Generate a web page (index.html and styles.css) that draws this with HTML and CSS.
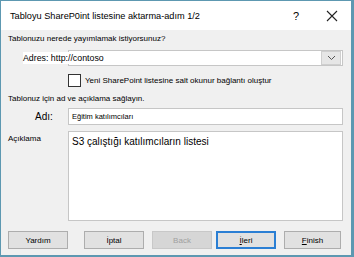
FILE: index.html
```html
<!DOCTYPE html>
<html lang="tr">
<head>
<meta charset="utf-8">
<link rel="stylesheet" href="styles.css">
</head>
<body>
<div class="dialog">
  <div class="titlebar">
    <span class="title">Tabloyu ShareP0int listesine aktarma-adım 1/2</span>
    <span class="help">?</span>
    <span class="close">
      <svg width="12" height="12" viewBox="0 0 12 12"><path d="M1 1 L11 11 M11 1 L1 11" stroke="#222" stroke-width="1.1" fill="none"/></svg>
    </span>
  </div>
  <div class="content">
    <div class="section">Tablonuzu nerede yayımlamak istiyorsunuz?</div>
    <div class="row addr-row">
      <span class="addr-label">Adres: http://contoso</span>
      <div class="combo">
        <span class="combo-btn">
          <svg width="9" height="6" viewBox="0 0 9 6"><path d="M1 1 L4.5 4.5 L8 1" stroke="#555" stroke-width="1" fill="none"/></svg>
        </span>
      </div>
    </div>
    <div class="row check-row">
      <span class="checkbox"></span>
      <span class="small">Yeni SharePoint listesine salt okunur bağlantı oluştur</span>
    </div>
    <div class="section section2">Tablonuz için ad ve açıklama sağlayın.</div>
    <div class="row name-row">
      <span class="name-label">Adı:</span>
      <div class="input"><span class="input-text">Eğitim katılımcıları</span></div>
    </div>
    <div class="row desc-row">
      <span class="small desc-label">Açıklama</span>
      <div class="textarea">S3 çalıştığı katılımcıların listesi</div>
    </div>
  </div>
  <div class="buttons">
    <span class="btn">Yardım</span>
    <span class="btn">İptal</span>
    <span class="btn disabled">Back</span>
    <span class="btn primary"><u>İ</u>leri</span>
    <span class="btn"><u>F</u>inish</span>
  </div>
</div>
</body>
</html>
```

FILE: styles.css
```css
html, body {
  margin: 0;
  padding: 0;
  background: #f0f0f0;
}
.dialog {
  width: 354px;
  height: 257px;
  box-sizing: border-box;
  border: 1px solid #5d98b1;
  border-right-width: 3px;
  border-bottom-width: 2px;
  background: #f0f0f0;
  display: flex;
  flex-direction: column;
  font-family: "Liberation Sans", Arial, sans-serif;
  color: #000;
}
.titlebar {
  height: 29px;
  background: #fff;
  display: flex;
  align-items: center;
  padding-left: 9px;
  padding-right: 13px;
  flex: none;
}
.title {
  font-family: "Liberation Sans", Arial, sans-serif;
  font-size: 9.2px;
  flex: 1;
  padding-top: 1px;
}
.help {
  font-family: "Liberation Sans", sans-serif;
  font-size: 11px;
  margin-right: 27px;
}
.close {
  display: flex;
}
.content {
  padding: 0 8px 0 7px;
  flex: 1;
  display: flex;
  flex-direction: column;
}
.section {
  font-size: 8px;
  margin-top: 3px;
  height: 12px;
  line-height: 12px;
}
.small {
  font-size: 8px;
}
.row {
  display: flex;
  align-items: center;
}
.addr-row {
  margin-top: 5px;
  height: 16px;
  position: relative;
}
.addr-label {
  position: absolute;
  left: 15px;
  top: 2px;
  background: #fff;
  font-family: "Liberation Sans", sans-serif;
  font-size: 8.8px;
  line-height: 12px;
  padding-right: 2px;
  z-index: 1;
}
.combo {
  margin-left: 60px;
  flex: 1;
  height: 16px;
  box-sizing: border-box;
  border: 1px solid #c6c6c6;
  background: #fff;
  display: flex;
  justify-content: flex-end;
  padding: 0 1px;
  align-items: center;
}
.combo-btn {
  width: 18px;
  height: 12px;
  background: #e6e6e6;
  border: 1px solid #cfcfcf;
  display: flex;
  align-items: center;
  justify-content: center;
}
.check-row {
  margin-top: 8px;
  height: 13px;
  padding-left: 60px;
  gap: 4px;
}
.checkbox {
  width: 11px;
  height: 11px;
  border: 1px solid #333;
  background: #fff;
}
.section2 {
  margin-top: 6px;
}
.name-row {
  margin-top: 3px;
  height: 17px;
}
.name-label {
  width: 60px;
  box-sizing: border-box;
  padding-left: 27px;
  font-family: "Liberation Sans", sans-serif;
  font-size: 10px;
}
.input {
  flex: 1;
  height: 17px;
  box-sizing: border-box;
  border: 1px solid #c6c6c6;
  background: #fff;
  padding-left: 3px;
  display: flex;
  align-items: center;
}
.input-text {
  font-size: 7.5px;
}
.desc-row {
  margin-top: 6px;
  align-items: flex-start;
}
.desc-label {
  width: 60px;
  padding-top: 3px;
}
.textarea {
  flex: 1;
  height: 90px;
  box-sizing: border-box;
  border: 1px solid #c6c6c6;
  background: #fff;
  padding: 3px 3px;
  font-family: "Liberation Sans", sans-serif;
  font-size: 10px;
  line-height: 14px;
}
.buttons {
  display: flex;
  padding: 0 0 6px 7px;
  gap: 16px;
  height: 18px;
  flex: none;
}
.btn {
  width: 60px;
  height: 18px;
  box-sizing: border-box;
  border: 1px solid #adadad;
  background: #e1e1e1;
  font-size: 8px;
  display: flex;
  align-items: center;
  justify-content: center;
}
.btn.disabled {
  color: #a0a0a0;
  background: #d6d6d6;
  border-color: #c8c8c8;
}
.btn.primary {
  border: 2px solid #2b7fd4;
}
.btn:nth-child(3) { margin-left: -8px; }
.btn:nth-child(4) { margin-left: -12px; }
.btn:nth-child(5) { margin-left: -8px; width: 57px; }
u { text-decoration: underline; }
```
